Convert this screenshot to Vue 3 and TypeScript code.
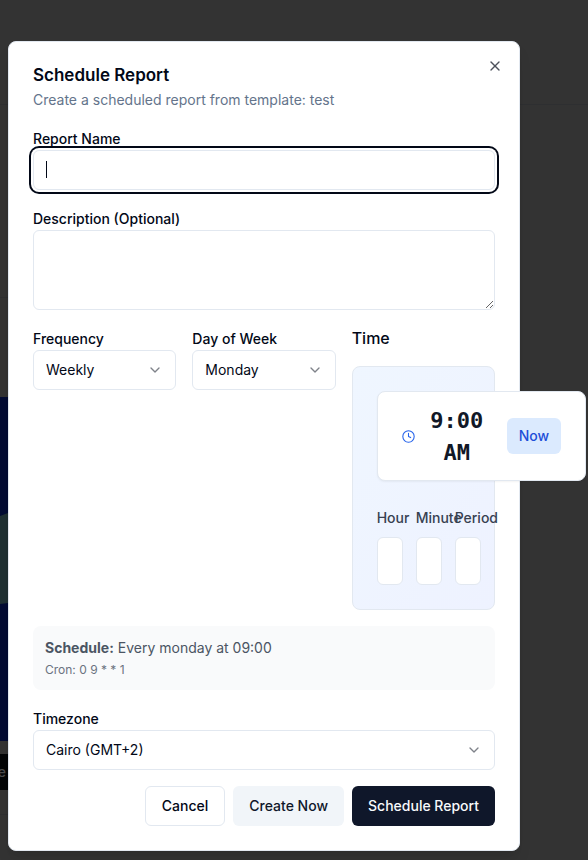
<script setup lang="ts">
import { onMounted, ref } from 'vue'

const nameInput = ref<HTMLInputElement | null>(null)
const nameFocused = ref(true)
const reportName = ref('')
const description = ref('')
const frequency = ref('Weekly')
const day = ref('Monday')
const timezone = ref('Cairo (GMT+2)')

const frequencies: string[] = ['Daily', 'Weekly', 'Monthly']
const days: string[] = ['Monday', 'Tuesday', 'Wednesday', 'Thursday', 'Friday']
const timeParts: { id: string; label: string }[] = [
  { id: 'hour', label: 'Hour' },
  { id: 'minute', label: 'Minute' },
  { id: 'period', label: 'Period' },
]

onMounted(() => nameInput.value?.focus())
</script>

<template>
  <div class="page">
    <div class="backdrop" aria-hidden="true">
      <div class="bar"></div>
      <div class="section"></div>
      <div class="preview">
        <svg class="preview-art" viewBox="0 0 8 344" preserveAspectRatio="none">
          <path d="M0 119 L8 116 V206 L0 207 Z" fill="#1f3033" />
        </svg>
      </div>
      <div class="use"><span>e</span></div>
      <div class="section-end"></div>
    </div>

    <form class="dialog" role="dialog" aria-labelledby="dialog-title" @submit.prevent>
      <button type="button" class="close" aria-label="Close">
        <svg width="16" height="16" viewBox="0 0 24 24" fill="none" stroke="currentColor" stroke-width="2" stroke-linecap="round" stroke-linejoin="round">
          <path d="M18 6 6 18" /><path d="m6 6 12 12" />
        </svg>
      </button>

      <header class="head">
        <h2 id="dialog-title">Schedule Report</h2>
        <p>Create a scheduled report from template: test</p>
      </header>

      <div class="field">
        <label for="name">Report Name</label>
        <div class="name-box">
          <input
            id="name"
            ref="nameInput"
            v-model="reportName"
            type="text"
            class="control"
            :class="{ ring: nameFocused }"
            @focus="nameFocused = true"
          />
          <span v-if="nameFocused && !reportName" class="caret"></span>
        </div>
      </div>

      <div class="field">
        <label for="description">Description (Optional)</label>
        <textarea id="description" v-model="description" class="control area" @focus="nameFocused = false"></textarea>
      </div>

      <div class="columns">
        <div class="field">
          <label for="frequency">Frequency</label>
          <div class="select">
            <select id="frequency" v-model="frequency" class="control">
              <option v-for="f in frequencies" :key="f">{{ f }}</option>
            </select>
            <svg class="chevron" width="16" height="16" viewBox="0 0 24 24"><path d="m6 9 6 6 6-6" /></svg>
          </div>
        </div>
        <div class="field">
          <label for="day">Day of Week</label>
          <div class="select">
            <select id="day" v-model="day" class="control">
              <option v-for="d in days" :key="d">{{ d }}</option>
            </select>
            <svg class="chevron" width="16" height="16" viewBox="0 0 24 24"><path d="m6 9 6 6 6-6" /></svg>
          </div>
        </div>
        <div class="time">
          <h3>Time</h3>
          <div class="panel">
            <div class="clock-card">
              <svg class="clock" width="13" height="13" viewBox="0 0 24 24" fill="none" stroke="currentColor" stroke-width="2" stroke-linecap="round" stroke-linejoin="round">
                <circle cx="12" cy="12" r="10.5" /><path d="M12 6v6l4 2" />
              </svg>
              <span class="value">9:00 AM</span>
              <button type="button" class="now">Now</button>
            </div>
            <div class="parts">
              <div v-for="p in timeParts" :key="p.id" class="part">
                <label :for="p.id">{{ p.label }}</label>
                <select :id="p.id" class="control"></select>
              </div>
            </div>
          </div>
        </div>
      </div>

      <div class="summary">
        <p class="rule"><strong>Schedule:</strong> Every monday at 09:00</p>
        <p class="cron">Cron: 0 9 * * 1</p>
      </div>

      <div class="field">
        <label for="timezone">Timezone</label>
        <div class="select">
          <select id="timezone" v-model="timezone" class="control">
            <option>Cairo (GMT+2)</option>
          </select>
          <svg class="chevron" width="16" height="16" viewBox="0 0 24 24"><path d="m6 9 6 6 6-6" /></svg>
        </div>
      </div>

      <footer class="actions">
        <button type="button" class="btn outline">Cancel</button>
        <button type="button" class="btn secondary">Create Now</button>
        <button type="submit" class="btn primary">Schedule Report</button>
      </footer>
    </form>
  </div>
</template>

<style>
body {
  margin: 0;
  background: #333333;
}
</style>

<style scoped>
* {
  box-sizing: border-box;
}
h2, h3, p {
  margin: 0;
}
button, input, select, textarea {
  font: inherit;
  color: inherit;
}
.page {
  display: grid;
  min-height: 100vh;
  overflow: hidden;
  background: #333333;
  font-family: Inter, "Liberation Sans", sans-serif;
  font-size: 14px;
  line-height: 20px;
  color: #020817;
}
.backdrop, .dialog {
  grid-area: 1 / 1;
}
.backdrop {
  display: flex;
  flex-direction: column;
}
.bar {
  height: 105px;
  border-bottom: 1px solid #2e2f31;
}
.section {
  width: 8px;
  height: 193px;
  border-bottom: 1px solid #2e2f31;
}
.preview {
  width: 8px;
  height: 344px;
  margin-top: 99px;
  background: #020b33;
}
.preview-art {
  display: block;
  width: 100%;
  height: 100%;
}
.use {
  display: flex;
  align-items: center;
  justify-content: flex-end;
  width: 8px;
  height: 36px;
  margin-top: 13px;
  padding-right: 2px;
  background: #030507;
  color: #4a4b4c;
  font-weight: 500;
}
.section-end {
  width: 8px;
  height: 25px;
  border-bottom: 1px solid #2e2f31;
}
.dialog {
  position: relative;
  align-self: start;
  display: flex;
  flex-direction: column;
  gap: 16px;
  width: calc(100% - 16px);
  max-width: 512px;
  margin: 41px 8px 9px;
  padding: 24px;
  border: 1px solid #e2e8f0;
  border-radius: 8px;
  background: #ffffff;
  box-shadow: 0 10px 15px -3px rgba(0, 0, 0, 0.1), 0 4px 6px -4px rgba(0, 0, 0, 0.1);
}
.close {
  position: absolute;
  top: 16px;
  right: 16px;
  display: flex;
  padding: 0;
  border: 0;
  background: none;
  opacity: 0.7;
}
.head {
  display: flex;
  flex-direction: column;
  gap: 6px;
}
.head h2 {
  font-size: 17px;
  font-weight: 600;
  line-height: 18px;
}
.head p {
  color: #64748b;
}
.field {
  display: flex;
  flex-direction: column;
  min-width: 0;
}
.field label {
  padding-top: 3px;
  padding-bottom: 1px;
  line-height: 20px;
  font-weight: 500;
}
.control {
  width: 100%;
  height: 40px;
  margin: 0;
  padding: 0 12px;
  border: 1px solid #e2e8f0;
  border-radius: 6px;
  outline: none;
  background: #ffffff;
  appearance: none;
}
.name-box {
  position: relative;
  display: grid;
}
.name-box .control {
  caret-color: transparent;
}
.ring {
  box-shadow: 0 0 0 2px #ffffff, 0 0 0 4px #020817;
}
.caret {
  position: absolute;
  top: 11px;
  left: 13px;
  width: 1px;
  height: 17px;
  background: #020817;
}
.area {
  height: 80px;
  padding: 8px 12px;
  resize: vertical;
}
.columns {
  display: grid;
  grid-template-columns: repeat(3, minmax(0, 1fr));
  gap: 16px;
}
.select {
  display: grid;
  align-items: center;
}
.select > * {
  grid-area: 1 / 1;
}
.chevron {
  justify-self: end;
  margin-right: 13px;
  fill: none;
  stroke: #020817;
  stroke-width: 2;
  stroke-linecap: round;
  stroke-linejoin: round;
  opacity: 0.5;
  pointer-events: none;
}
.time {
  display: flex;
  flex-direction: column;
  gap: 16px;
  min-width: 0;
}
.time h3 {
  font-size: 16px;
  font-weight: 500;
  line-height: 24px;
}
.panel {
  display: flex;
  flex-direction: column;
  align-items: flex-start;
  gap: 24px;
  padding: 24px;
  border: 1px solid #e2e8f0;
  border-radius: 8px;
  background: linear-gradient(to bottom right, #eff6ff, #eef2ff);
}
.clock-card {
  display: flex;
  flex: none;
  align-items: center;
  width: max-content;
  padding: 11px 24px;
  border: 1px solid #e2e8f0;
  border-radius: 8px;
  background: #ffffff;
  box-shadow: 0 1px 2px rgba(0, 0, 0, 0.05);
}
.clock {
  flex: none;
  color: #2563eb;
}
.value {
  width: 60px;
  margin: 0 20px 0 12px;
  padding-top: 2px;
  font-family: "DejaVu Sans Mono", monospace;
  font-size: 22px;
  font-weight: 700;
  line-height: 32px;
  text-align: center;
  color: #111827;
}
.now {
  padding: 8px 12px;
  border: 0;
  border-radius: 6px;
  background: #dbeafe;
  color: #1d4ed8;
  font-weight: 500;
}
.parts {
  display: grid;
  grid-template-columns: repeat(3, 26px);
  gap: 13px;
}
.part {
  display: flex;
  flex-direction: column;
  gap: 6px;
}
.part label {
  line-height: 26px;
  font-weight: 500;
  color: #374151;
}
.part .control {
  height: 48px;
}
.summary {
  display: flex;
  flex-direction: column;
  gap: 4px;
  padding: 12px;
  border-radius: 8px;
  background: #f9fafb;
}
.rule {
  color: #4b5563;
}
.cron {
  font-size: 12px;
  line-height: 16px;
  color: #6b7280;
}
.actions {
  display: flex;
  justify-content: flex-end;
  gap: 8px;
}
.btn {
  height: 40px;
  padding: 0 16px;
  border: 0;
  border-radius: 6px;
  font-weight: 500;
  white-space: nowrap;
}
.outline {
  border: 1px solid #e2e8f0;
  background: #ffffff;
}
.secondary {
  background: #f1f5f9;
  color: #0f172a;
}
.primary {
  background: #0f172a;
  color: #f8fafc;
}
</style>
